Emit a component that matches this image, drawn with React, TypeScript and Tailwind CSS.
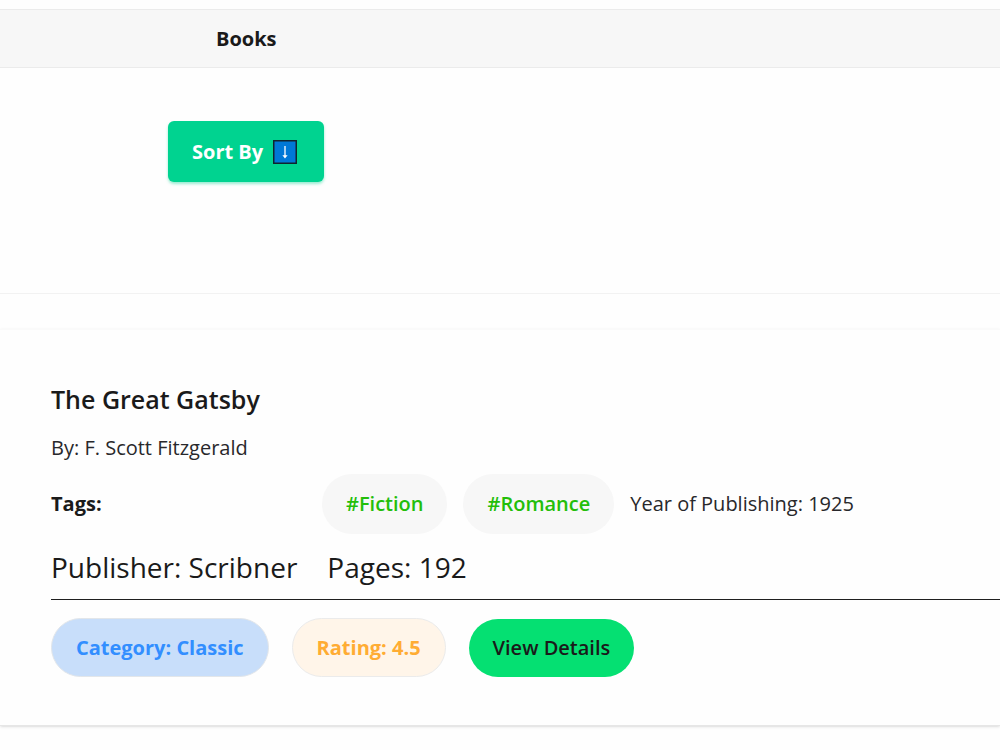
interface Book {
  bookId: number;
  bookName: string;
  author: string;
  tags: string[];
  yearOfPublishing: number;
  publisher: string;
  totalPages: number;
  category: string;
  rating: number;
}

const books: Book[] = [
  {
    bookId: 1,
    bookName: "The Great Gatsby",
    author: "F. Scott Fitzgerald",
    tags: ["Fiction", "Romance"],
    yearOfPublishing: 1925,
    publisher: "Scribner",
    totalPages: 192,
    category: "Classic",
    rating: 4.5,
  },
];

const SortIcon = () => (
  <svg width="24" height="24" viewBox="0 0 24 24" aria-hidden="true">
    <rect x="0.75" y="0.75" width="22.5" height="22.5" fill="#0078d7" stroke="#10242e" strokeWidth="1.5" />
    <path d="M12 6v11" fill="none" stroke="#fff" strokeWidth="1.3" />
    <path d="M9.4 15.2h5.2L12 18.4z" fill="#fff" />
  </svg>
);

const BookCard = ({ book }: { book: Book }) => {
  const { bookName, author, tags, yearOfPublishing, publisher, totalPages, category, rating } = book;

  return (
    <article className="border-t border-b border-t-[#fafafa] border-b-[#e6e6e6] px-[51px] pt-[47px] pb-12 shadow-sm">
      <h2 className="text-[25px] leading-[44px] font-semibold">{bookName}</h2>
      <p className="mt-[11px] text-[20px] leading-8 text-[#28282b]">By: {author}</p>

      {/* Tags */}
      <div className="mt-[10px] flex items-center gap-4 text-[20px]">
        <span className="w-[255px] shrink-0 font-bold">Tags:</span>
        {tags.map((tag) => (
          <span
            key={tag}
            className="flex h-[60px] shrink-0 items-center rounded-full bg-[#f7f7f7] px-6 font-semibold text-[#23be0a]"
          >
            #{tag}
          </span>
        ))}
        <p className="whitespace-nowrap text-[#28282b]">Year of Publishing: {yearOfPublishing}</p>
      </div>

      <div className="mt-[11px] flex gap-[30px] text-[28px] leading-[44px]">
        <p>Publisher: {publisher}</p>
        <p>Pages: {totalPages}</p>
      </div>

      <hr className="mt-[10px] -mr-[51px] border-[#1f1f1f]" />

      <div className="mt-[18px] flex items-center gap-[23px] text-[20px]">
        <span className="flex h-[59px] items-center rounded-full border border-[#e2e6ea] bg-[#c8defa] px-6 font-bold text-[#328eff]">
          Category: {category}
        </span>
        <span className="flex h-[59px] items-center rounded-full border border-[#ebebeb] bg-[#fff5e9] px-6 font-bold text-[#ffac33]">
          Rating: {rating}
        </span>
        <button type="button" className="h-[58px] rounded-full bg-[#05e072] px-6 font-semibold">
          View Details
        </button>
      </div>
    </article>
  );
};

const App = () => {
  return (
    <main className="overflow-x-hidden bg-[#fefefe] pt-[9px] pb-6 font-['Open_Sans','Noto_Sans',sans-serif] text-[#1a1a1a]">
      <header className="flex h-[59px] items-center border-y border-[#ebebeb] bg-[#f7f7f7] pl-[216px]">
        <h1 className="text-[20px] font-bold">Books</h1>
      </header>

      <section className="border-b border-[#f2f2f2] px-[168px] pt-[53px] pb-[111px]">
        <button
          type="button"
          className="flex h-[61px] items-center gap-[10px] rounded-md bg-[#00d390] pr-[27px] pl-6 text-[20px] font-bold text-white shadow-[0_2px_3px_#00d39066]"
        >
          Sort By
          <SortIcon />
        </button>
      </section>

      <section className="mt-[35px]">
        {books.map((book) => (
          <BookCard key={book.bookId} book={book} />
        ))}
      </section>
    </main>
  );
};

export default App;
